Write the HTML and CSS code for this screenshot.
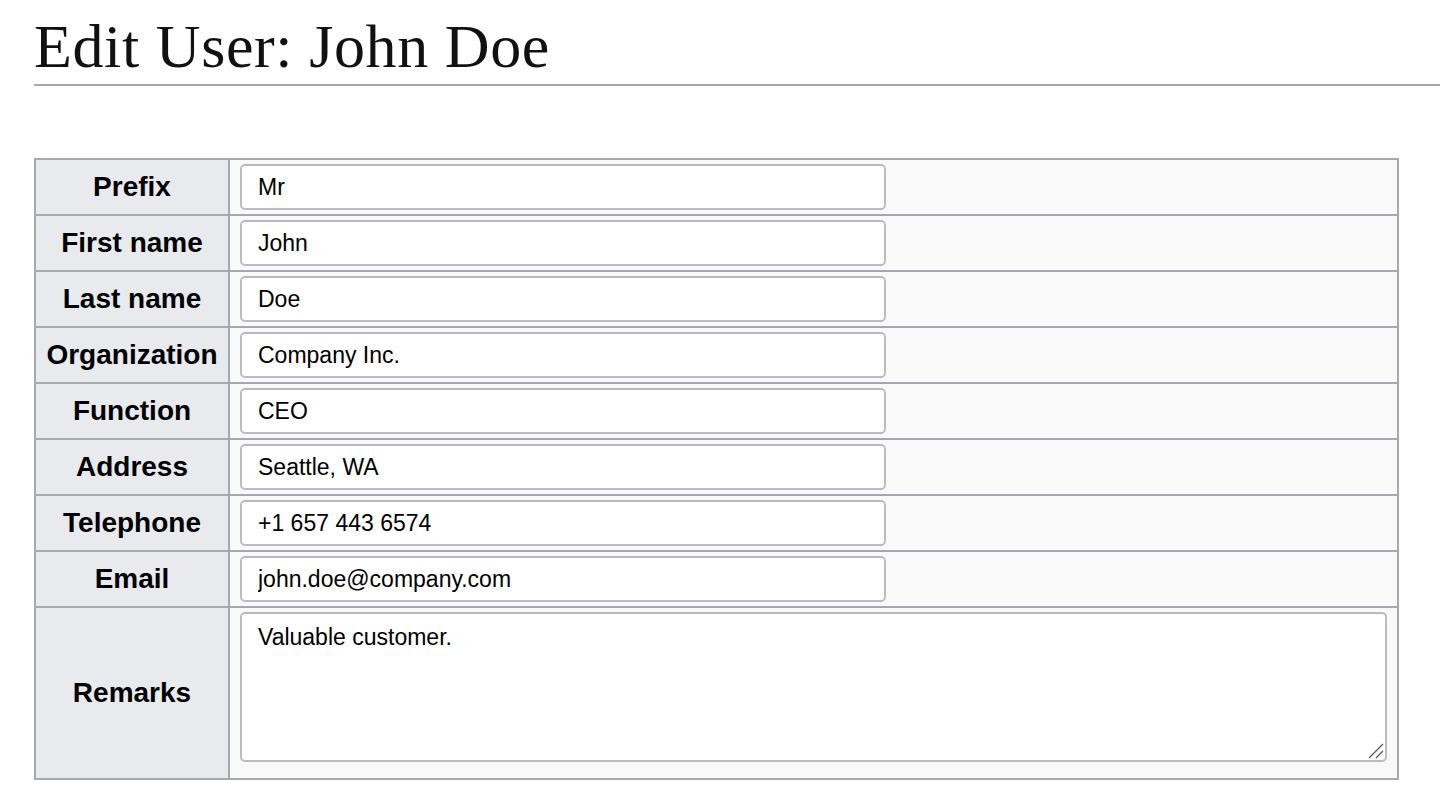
FILE: index.html
```html
<!DOCTYPE html>
<html lang="en">
<head>
<meta charset="utf-8">
<title>Edit User: John Doe</title>
<link rel="stylesheet" href="styles.css">
</head>
<body>
<header class="page-head">
  <h1 class="title">Edit User: John Doe</h1>
</header>
<hr class="rule">
<form class="user-form">
  <table class="form-table">
    <tr><th class="label">Prefix</th><td class="field"><input class="text-input" type="text" value="Mr"></td></tr>
    <tr><th class="label">First name</th><td class="field"><input class="text-input" type="text" value="John"></td></tr>
    <tr><th class="label">Last name</th><td class="field"><input class="text-input" type="text" value="Doe"></td></tr>
    <tr><th class="label">Organization</th><td class="field"><input class="text-input" type="text" value="Company Inc."></td></tr>
    <tr><th class="label">Function</th><td class="field"><input class="text-input" type="text" value="CEO"></td></tr>
    <tr><th class="label">Address</th><td class="field"><input class="text-input" type="text" value="Seattle, WA"></td></tr>
    <tr><th class="label">Telephone</th><td class="field"><input class="text-input" type="text" value="+1 657 443 6574"></td></tr>
    <tr><th class="label">Email</th><td class="field"><input class="text-input" type="text" value="john.doe@company.com"></td></tr>
    <tr class="tall"><th class="label">Remarks</th><td class="field">
      <div class="area-wrap">
        <textarea class="text-area">Valuable customer.</textarea>
        <svg class="grip" width="18" height="18" viewBox="0 0 18 18" aria-hidden="true">
          <line x1="2" y1="16" x2="16" y2="2" stroke="#5a5a5a" stroke-width="1.3"/>
          <line x1="9" y1="16" x2="16" y2="9" stroke="#5a5a5a" stroke-width="1.3"/>
        </svg>
      </div>
    </td></tr>
  </table>
</form>
</body>
</html>
```

FILE: styles.css
```css
html, body {
  margin: 0;
  padding: 0;
  background: #ffffff;
}

body {
  font-family: "Liberation Sans", Arial, sans-serif;
  color: #000;
}

.page-head {
  padding: 0 0 0 34px;
}

.title {
  margin: 0;
  padding-top: 12px;
  font-family: "Liberation Serif", "Times New Roman", serif;
  font-weight: normal;
  font-size: 62px;
  letter-spacing: 0.6px;
  line-height: 68px;
  height: 72px;
  color: #111;
}

.rule {
  margin: 0 0 0 34px;
  border: 0;
  height: 2px;
  background: #a4a8af;
}

.user-form {
  padding: 72px 0 0 34px;
}

.form-table {
  border-collapse: collapse;
  width: 1365px;
  border: 2px solid #a4a8af;
}

.form-table th,
.form-table td {
  border: 2px solid #a4a8af;
  padding: 0;
}

.label {
  width: 192px;
  background: #e9eaee;
  font-size: 28px;
  font-weight: bold;
  text-align: center;
  vertical-align: middle;
  height: 54px;
}

.field {
  background: #f9f9f9;
  padding: 0 10px !important;
  vertical-align: middle;
}

.text-input {
  display: block;
  box-sizing: border-box;
  width: 646px;
  height: 46px;
  margin: 0;
  padding: 0 16px;
  border: 2px solid #bcbcbc;
  border-radius: 5px;
  background: #fff;
  font-family: "Liberation Sans", Arial, sans-serif;
  font-size: 23px;
  color: #000;
  outline: none;
}

.tall .label {
  height: 170px;
}

.tall .field {
  vertical-align: top;
  padding-top: 4px !important;
}

.area-wrap {
  position: relative;
}

.text-area {
  display: block;
  box-sizing: border-box;
  width: 100%;
  height: 150px;
  margin: 0;
  padding: 9px 16px;
  border: 2px solid #bcbcbc;
  border-radius: 5px;
  background: #fff;
  font-family: "Liberation Sans", Arial, sans-serif;
  font-size: 23px;
  line-height: 28px;
  color: #000;
  resize: none;
  outline: none;
}

.grip {
  position: absolute;
  right: 2px;
  bottom: 2px;
  pointer-events: none;
}
```
